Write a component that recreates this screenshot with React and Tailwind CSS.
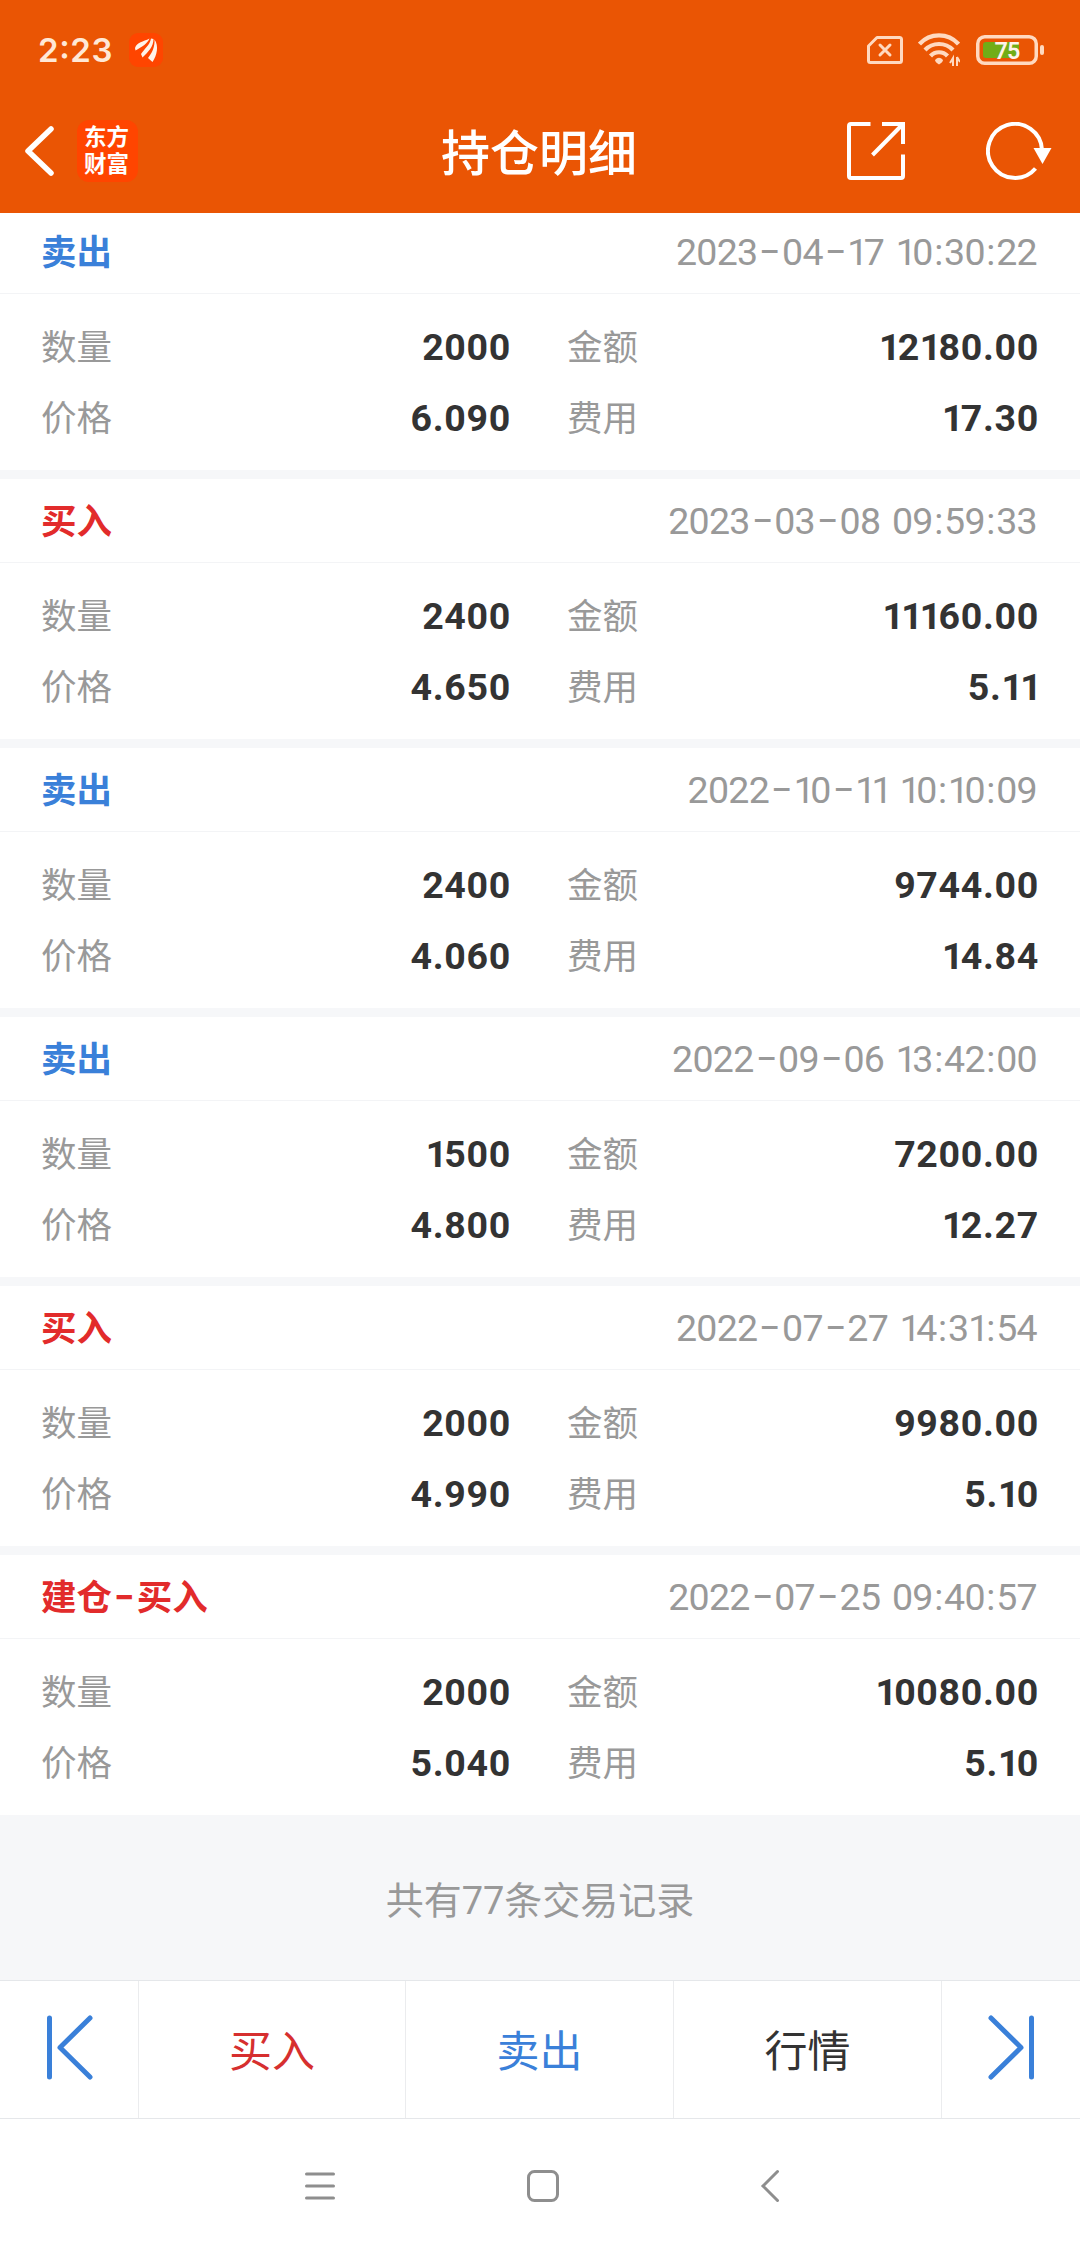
import React from "react";

const records = [
  { type: "卖出", side: "sell", time: "2023-04-17 10:30:22", qty: "2000", amount: "12180.00", price: "6.090", fee: "17.30" },
  { type: "买入", side: "buy", time: "2023-03-08 09:59:33", qty: "2400", amount: "11160.00", price: "4.650", fee: "5.11" },
  { type: "卖出", side: "sell", time: "2022-10-11 10:10:09", qty: "2400", amount: "9744.00", price: "4.060", fee: "14.84" },
  { type: "卖出", side: "sell", time: "2022-09-06 13:42:00", qty: "1500", amount: "7200.00", price: "4.800", fee: "12.27" },
  { type: "买入", side: "buy", time: "2022-07-27 14:31:54", qty: "2000", amount: "9980.00", price: "4.990", fee: "5.10" },
  { type: "建仓-买入", side: "buy", time: "2022-07-25 09:40:57", qty: "2000", amount: "10080.00", price: "5.040", fee: "5.10" },
];

// "1" 收窄, "-" 加宽, 其余字符等宽
const glyphClass = {
  "1": "tracking-[-4.6px]",
  "-": "inline-block scale-x-[1.3] mx-[4px] font-[Inter]",
  ":": "px-[1.5px]",
  " ": "pl-[3px]",
};

const boldGlyphClass = {
  "1": "tracking-[-2.8px]",
};

function Glyphs({ text, classes = glyphClass }) {
  return text.split(/([-1: ])/).map((part, i) =>
    classes[part] ? (
      <span key={i} className={classes[part]}>{part}</span>
    ) : (
      part
    )
  );
}

function StatusBar() {
  return (
    <div className="flex h-[100px] items-center pl-[38px] pr-9">
      <span className="w-[91px] text-[33px] font-semibold leading-none tracking-[0.6px] text-[#ffe8d6]">2:23</span>
      <svg width="34" height="34" viewBox="0 0 34 34">
        <rect width="34" height="34" rx="9" fill="#ff4500" />
        <g fill="#fff3ea">
          <path d="M6 15C8 9 14 9 20.500 5.500C18 11 14 13 6.500 17.500Z" />
          <path d="M12 21C15 16 21 12 22 5.500L24.500 6C24.500 14 19 19 13.500 24.500Z" />
          <path d="M19 25C23 20 26 14 25.500 6.500C30 13 28 22 23.500 29Z" />
        </g>
      </svg>

      <div className="ml-auto flex items-center">
        {/* 无 SIM 卡 */}
        <svg width="36" height="28" viewBox="0 0 36 28" fill="none" stroke="#ffd9c0" strokeWidth="3">
          <path d="M10 1.500H32.500Q34.500 1.500 34.500 3.500V24.500Q34.500 26.500 32.500 26.500H3.500Q1.500 26.500 1.500 24.500V10Z" strokeLinejoin="round" />
          <path d="M13 9L23 19M23 9L13 19" strokeLinecap="round" />
        </svg>
        <svg className="ml-[15px]" width="42" height="34" viewBox="0 0 42 34" fill="none" stroke="#ffd9c0" strokeWidth="4.200">
          <path d="M1.500 11C12 -0.500 30 -0.500 40.500 11" />
          <path d="M7 17C14.500 9 27.500 9 35 17" />
          <path d="M12.500 23C17 18 25 18 29.500 23" />
          <path d="M17 27Q21 22.500 25 27Q25 29 21 31.500Q17 29 17 27Z" fill="#ffd9c0" stroke="none" />
          <path d="M35 33V25L32 30M39 24V33M39 24L42 29" strokeWidth="2" />
        </svg>
        <svg className="ml-4" width="68" height="30" viewBox="0 0 68 30">
          <rect x="1.750" y="1.750" width="58.500" height="26.500" rx="7" fill="none" stroke="#ffd9c0" strokeWidth="3.500" />
          <rect x="7" y="7" width="36" height="16" rx="3" fill="#71ad17" />
          <rect x="64" y="10" width="4" height="10" rx="2" fill="#ffd9c0" />
          <text x="31" y="24" textAnchor="middle" fill="#fff3ea" fontSize="23.500" fontWeight="600" letterSpacing="-1" fontFamily="Roboto, sans-serif">75</text>
        </svg>
      </div>
    </div>
  );
}

function Header() {
  return (
    <header className="h-[213px] shrink-0 bg-[#ea5504]">
      <StatusBar />
      <div className="grid h-[102px] grid-cols-[1fr_auto_1fr] items-center">
        <div className="flex items-center pl-6">
          <svg width="31" height="50" viewBox="0 0 31 50" fill="none" stroke="#fff" strokeWidth="5.500" strokeLinecap="round" strokeLinejoin="round">
            <path d="M27 3L4 25L27 47" />
          </svg>
          <div className="ml-[22px] flex h-[62px] w-[61px] flex-col items-center justify-center rounded-xl bg-[#ff4500] pb-[3px] pr-[2px] text-[22.500px] font-bold leading-[27px] text-white">
            <span>东方</span>
            <span>财富</span>
          </div>
        </div>
        <h1 className="pr-[2px] pt-[5px] text-[49px] font-medium leading-none text-white">持仓明细</h1>
        <div className="flex items-center justify-end pr-7">
          <svg width="58" height="58" viewBox="0 0 58 58" fill="none" stroke="#fff" strokeWidth="4">
            <path d="M23.500 2H4Q2 2 2 4V54Q2 56 4 56H54Q56 56 56 54V32.500" />
            <path d="M35 2H56V22M55 3L25.500 33" />
          </svg>
          <svg className="ml-[81px]" width="66" height="58" viewBox="0 0 66 58" fill="none" stroke="#fff" strokeWidth="4">
            <path d="M49.500 46.500A27 27 0 1 1 56 28" />
            <path d="M47.500 26H65.500L56.500 42Z" fill="#fff" stroke="none" />
          </svg>
        </div>
      </div>
    </header>
  );
}

function Field({ label, value }) {
  return (
    <div className="flex h-[71px] items-center justify-between">
      <span className="text-[35.500px] text-[#999]">{label}</span>
      <span className="font-[Roboto] text-[37.500px] font-bold tracking-[0.7px] text-[#333]">
        <Glyphs text={value} classes={boldGlyphClass} />
      </span>
    </div>
  );
}

function RecordItem({ item }) {
  return (
    <div className="h-[260px] shrink-0 bg-white">
      <div className="flex h-[84px] items-center justify-between border-b border-[#f3f4f6] pl-[41px] pr-[43px] pt-[2px]">
        <span className={item.side === "buy" ? "text-[35.500px] font-bold text-[#e22b2b]" : "text-[35.500px] font-bold text-[#3a80d9]"}>
          <Glyphs text={item.type} />
        </span>
        <span className="whitespace-pre font-[Roboto] text-[37.500px] tracking-[-0.7px] text-[#999]">
          <Glyphs text={item.time} />
        </span>
      </div>
      <div className="grid grid-cols-[470px_1fr] gap-x-14 pl-[41px] pr-[41px] pt-[18px]">
        <Field label="数量" value={item.qty} />
        <Field label="金额" value={item.amount} />
        <Field label="价格" value={item.price} />
        <Field label="费用" value={item.fee} />
      </div>
    </div>
  );
}

function TabBar() {
  return (
    <div className="grid h-[139px] shrink-0 grid-cols-[138px_267px_268px_268px_1fr] border-y border-[#e5e7ea] bg-white text-[43px] [&>button+button]:border-l [&>button+button]:border-[#ebecee]">
      <button className="flex items-center pb-[3px] pl-[46px]">
        <svg width="48" height="66" viewBox="0 0 48 66" fill="none" stroke="#3a80d9" strokeWidth="5" strokeLinecap="round" strokeLinejoin="round">
          <path d="M3.500 3V62M44 3L14 32.500L44 62" />
        </svg>
      </button>
      <button className="pt-[3px] text-[#d62f2f]">买入</button>
      <button className="pt-[3px] text-[#3a80d9]">卖出</button>
      <button className="pt-[3px] text-[#333]">行情</button>
      <button className="flex items-center justify-end pb-[3px] pr-[45px]">
        <svg width="48" height="66" viewBox="0 0 48 66" fill="none" stroke="#3a80d9" strokeWidth="5" strokeLinecap="round" strokeLinejoin="round">
          <path d="M44.500 3V62M4 3L34 32.500L4 62" />
        </svg>
      </button>
    </div>
  );
}

// 系统导航栏
function SystemNav() {
  return (
    <div className="flex flex-1 items-center pl-[304px] pt-[4px]">
      <svg width="32" height="34" viewBox="0 0 32 34" stroke="#8e8e8e" strokeWidth="3" strokeLinecap="round">
        <path d="M2.500 5H29.500M2.500 17H29.500M2.500 29H29.500" />
      </svg>
      <svg className="ml-[190px]" width="34" height="34" viewBox="0 0 34 34" fill="none" stroke="#8e8e8e" strokeWidth="3">
        <rect x="2.500" y="2.500" width="29" height="29" rx="6" />
      </svg>
      <svg className="ml-[200px]" width="20" height="34" viewBox="0 0 20 34" fill="none" stroke="#8e8e8e" strokeWidth="3" strokeLinecap="round">
        <path d="M17.500 2.500L3 17L17.500 31.500" />
      </svg>
    </div>
  );
}

export default function App() {
  return (
    <div className="flex h-[2248px] w-[1080px] flex-col overflow-hidden bg-white font-[Inter,'Noto_Sans_CJK_SC',sans-serif] [font-feature-settings:'case']">
      <Header />
      {/* 列表已滚动到底部 */}
      <main className="flex h-[1767px] shrink-0 flex-col justify-end overflow-hidden bg-[#f6f7f9]">
        <div className="flex shrink-0 flex-col gap-[9px]">
          {records.map((item) => (
            <RecordItem key={item.time} item={item} />
          ))}
        </div>
        <div className="flex h-[165px] shrink-0 items-center justify-center pt-[8px] font-[Roboto,'Noto_Sans_CJK_SC',sans-serif] text-[38px] text-[#999]">
          共有77条交易记录
        </div>
      </main>
      <TabBar />
      <SystemNav />
    </div>
  );
}
